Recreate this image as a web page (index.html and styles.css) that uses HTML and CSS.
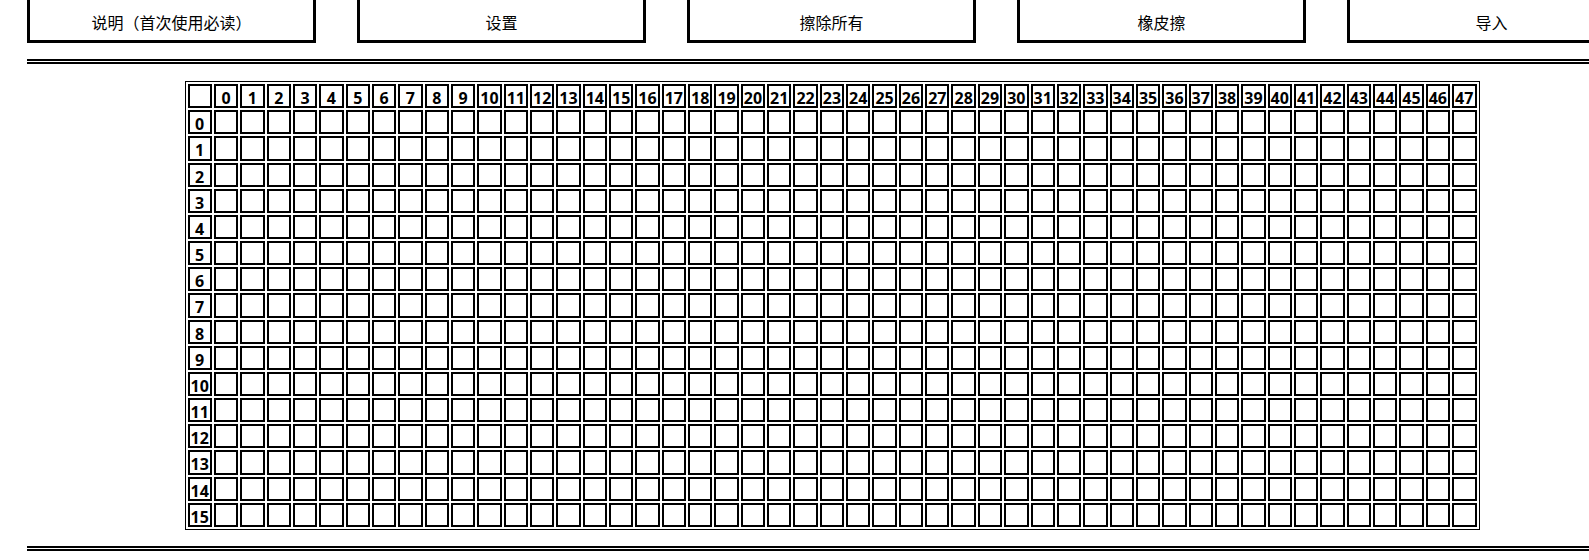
FILE: index.html
```html
<!DOCTYPE html>
<html lang="zh">
<head>
<meta charset="utf-8">
<title>Grid</title>
<link rel="stylesheet" href="styles.css">
</head>
<body>
<div class="page">
  <div class="toolbar">
    <div class="btn">说明（首次使用必读）</div>
    <div class="btn">设置</div>
    <div class="btn">擦除所有</div>
    <div class="btn">橡皮擦</div>
    <div class="btn">导入</div>
  </div>
  <div class="rule"></div>
  <div class="grid-wrap">
    <table class="grid">
      <tr><th></th><th>0</th><th>1</th><th>2</th><th>3</th><th>4</th><th>5</th><th>6</th><th>7</th><th>8</th><th>9</th><th>10</th><th>11</th><th>12</th><th>13</th><th>14</th><th>15</th><th>16</th><th>17</th><th>18</th><th>19</th><th>20</th><th>21</th><th>22</th><th>23</th><th>24</th><th>25</th><th>26</th><th>27</th><th>28</th><th>29</th><th>30</th><th>31</th><th>32</th><th>33</th><th>34</th><th>35</th><th>36</th><th>37</th><th>38</th><th>39</th><th>40</th><th>41</th><th>42</th><th>43</th><th>44</th><th>45</th><th>46</th><th>47</th></tr>
      <tr><th>0</th><td></td><td></td><td></td><td></td><td></td><td></td><td></td><td></td><td></td><td></td><td></td><td></td><td></td><td></td><td></td><td></td><td></td><td></td><td></td><td></td><td></td><td></td><td></td><td></td><td></td><td></td><td></td><td></td><td></td><td></td><td></td><td></td><td></td><td></td><td></td><td></td><td></td><td></td><td></td><td></td><td></td><td></td><td></td><td></td><td></td><td></td><td></td><td></td></tr>
      <tr><th>1</th><td></td><td></td><td></td><td></td><td></td><td></td><td></td><td></td><td></td><td></td><td></td><td></td><td></td><td></td><td></td><td></td><td></td><td></td><td></td><td></td><td></td><td></td><td></td><td></td><td></td><td></td><td></td><td></td><td></td><td></td><td></td><td></td><td></td><td></td><td></td><td></td><td></td><td></td><td></td><td></td><td></td><td></td><td></td><td></td><td></td><td></td><td></td><td></td></tr>
      <tr><th>2</th><td></td><td></td><td></td><td></td><td></td><td></td><td></td><td></td><td></td><td></td><td></td><td></td><td></td><td></td><td></td><td></td><td></td><td></td><td></td><td></td><td></td><td></td><td></td><td></td><td></td><td></td><td></td><td></td><td></td><td></td><td></td><td></td><td></td><td></td><td></td><td></td><td></td><td></td><td></td><td></td><td></td><td></td><td></td><td></td><td></td><td></td><td></td><td></td></tr>
      <tr><th>3</th><td></td><td></td><td></td><td></td><td></td><td></td><td></td><td></td><td></td><td></td><td></td><td></td><td></td><td></td><td></td><td></td><td></td><td></td><td></td><td></td><td></td><td></td><td></td><td></td><td></td><td></td><td></td><td></td><td></td><td></td><td></td><td></td><td></td><td></td><td></td><td></td><td></td><td></td><td></td><td></td><td></td><td></td><td></td><td></td><td></td><td></td><td></td><td></td></tr>
      <tr><th>4</th><td></td><td></td><td></td><td></td><td></td><td></td><td></td><td></td><td></td><td></td><td></td><td></td><td></td><td></td><td></td><td></td><td></td><td></td><td></td><td></td><td></td><td></td><td></td><td></td><td></td><td></td><td></td><td></td><td></td><td></td><td></td><td></td><td></td><td></td><td></td><td></td><td></td><td></td><td></td><td></td><td></td><td></td><td></td><td></td><td></td><td></td><td></td><td></td></tr>
      <tr><th>5</th><td></td><td></td><td></td><td></td><td></td><td></td><td></td><td></td><td></td><td></td><td></td><td></td><td></td><td></td><td></td><td></td><td></td><td></td><td></td><td></td><td></td><td></td><td></td><td></td><td></td><td></td><td></td><td></td><td></td><td></td><td></td><td></td><td></td><td></td><td></td><td></td><td></td><td></td><td></td><td></td><td></td><td></td><td></td><td></td><td></td><td></td><td></td><td></td></tr>
      <tr><th>6</th><td></td><td></td><td></td><td></td><td></td><td></td><td></td><td></td><td></td><td></td><td></td><td></td><td></td><td></td><td></td><td></td><td></td><td></td><td></td><td></td><td></td><td></td><td></td><td></td><td></td><td></td><td></td><td></td><td></td><td></td><td></td><td></td><td></td><td></td><td></td><td></td><td></td><td></td><td></td><td></td><td></td><td></td><td></td><td></td><td></td><td></td><td></td><td></td></tr>
      <tr><th>7</th><td></td><td></td><td></td><td></td><td></td><td></td><td></td><td></td><td></td><td></td><td></td><td></td><td></td><td></td><td></td><td></td><td></td><td></td><td></td><td></td><td></td><td></td><td></td><td></td><td></td><td></td><td></td><td></td><td></td><td></td><td></td><td></td><td></td><td></td><td></td><td></td><td></td><td></td><td></td><td></td><td></td><td></td><td></td><td></td><td></td><td></td><td></td><td></td></tr>
      <tr><th>8</th><td></td><td></td><td></td><td></td><td></td><td></td><td></td><td></td><td></td><td></td><td></td><td></td><td></td><td></td><td></td><td></td><td></td><td></td><td></td><td></td><td></td><td></td><td></td><td></td><td></td><td></td><td></td><td></td><td></td><td></td><td></td><td></td><td></td><td></td><td></td><td></td><td></td><td></td><td></td><td></td><td></td><td></td><td></td><td></td><td></td><td></td><td></td><td></td></tr>
      <tr><th>9</th><td></td><td></td><td></td><td></td><td></td><td></td><td></td><td></td><td></td><td></td><td></td><td></td><td></td><td></td><td></td><td></td><td></td><td></td><td></td><td></td><td></td><td></td><td></td><td></td><td></td><td></td><td></td><td></td><td></td><td></td><td></td><td></td><td></td><td></td><td></td><td></td><td></td><td></td><td></td><td></td><td></td><td></td><td></td><td></td><td></td><td></td><td></td><td></td></tr>
      <tr><th>10</th><td></td><td></td><td></td><td></td><td></td><td></td><td></td><td></td><td></td><td></td><td></td><td></td><td></td><td></td><td></td><td></td><td></td><td></td><td></td><td></td><td></td><td></td><td></td><td></td><td></td><td></td><td></td><td></td><td></td><td></td><td></td><td></td><td></td><td></td><td></td><td></td><td></td><td></td><td></td><td></td><td></td><td></td><td></td><td></td><td></td><td></td><td></td><td></td></tr>
      <tr><th>11</th><td></td><td></td><td></td><td></td><td></td><td></td><td></td><td></td><td></td><td></td><td></td><td></td><td></td><td></td><td></td><td></td><td></td><td></td><td></td><td></td><td></td><td></td><td></td><td></td><td></td><td></td><td></td><td></td><td></td><td></td><td></td><td></td><td></td><td></td><td></td><td></td><td></td><td></td><td></td><td></td><td></td><td></td><td></td><td></td><td></td><td></td><td></td><td></td></tr>
      <tr><th>12</th><td></td><td></td><td></td><td></td><td></td><td></td><td></td><td></td><td></td><td></td><td></td><td></td><td></td><td></td><td></td><td></td><td></td><td></td><td></td><td></td><td></td><td></td><td></td><td></td><td></td><td></td><td></td><td></td><td></td><td></td><td></td><td></td><td></td><td></td><td></td><td></td><td></td><td></td><td></td><td></td><td></td><td></td><td></td><td></td><td></td><td></td><td></td><td></td></tr>
      <tr><th>13</th><td></td><td></td><td></td><td></td><td></td><td></td><td></td><td></td><td></td><td></td><td></td><td></td><td></td><td></td><td></td><td></td><td></td><td></td><td></td><td></td><td></td><td></td><td></td><td></td><td></td><td></td><td></td><td></td><td></td><td></td><td></td><td></td><td></td><td></td><td></td><td></td><td></td><td></td><td></td><td></td><td></td><td></td><td></td><td></td><td></td><td></td><td></td><td></td></tr>
      <tr><th>14</th><td></td><td></td><td></td><td></td><td></td><td></td><td></td><td></td><td></td><td></td><td></td><td></td><td></td><td></td><td></td><td></td><td></td><td></td><td></td><td></td><td></td><td></td><td></td><td></td><td></td><td></td><td></td><td></td><td></td><td></td><td></td><td></td><td></td><td></td><td></td><td></td><td></td><td></td><td></td><td></td><td></td><td></td><td></td><td></td><td></td><td></td><td></td><td></td></tr>
      <tr><th>15</th><td></td><td></td><td></td><td></td><td></td><td></td><td></td><td></td><td></td><td></td><td></td><td></td><td></td><td></td><td></td><td></td><td></td><td></td><td></td><td></td><td></td><td></td><td></td><td></td><td></td><td></td><td></td><td></td><td></td><td></td><td></td><td></td><td></td><td></td><td></td><td></td><td></td><td></td><td></td><td></td><td></td><td></td><td></td><td></td><td></td><td></td><td></td><td></td></tr>
    </table>
  </div>
  <div class="rule"></div>
</div>
</body>
</html>
```

FILE: styles.css
```css
html, body {
  margin: 0;
  padding: 0;
  overflow: hidden;
  background: #fff;
  color: #000;
}

body {
  font-family: "Noto Sans CJK SC", "Noto Sans", sans-serif;
}

.page {
  margin-left: 27px;
  width: 1609px;
}

.toolbar {
  display: flex;
  justify-content: space-between;
  margin-top: -10px;
}

.btn {
  box-sizing: border-box;
  width: 289px;
  border: 3px solid #000;
  padding: 17px 0 6px;
  text-align: center;
  font-size: 16px;
  line-height: 24px;
}

.rule {
  height: 0;
  border-top: 5px double #000;
  margin-top: 16px;
}

.grid-wrap {
  display: flex;
  justify-content: center;
  padding-top: 17px;
  padding-left: 1px;
}

.grid {
  width: 1295px;
  height: 449px;
  table-layout: fixed;
  border: 1px solid #000;
  border-spacing: 2px;
}

.grid th,
.grid td {
  border: 2px solid #000;
  padding: 0;
}

.grid th {
  font-family: "Open Sans", "Noto Sans", sans-serif;
  font-weight: bold;
  font-size: 16px;
  line-height: 16px;
  padding-top: 4px;
  text-align: center;
}
```
